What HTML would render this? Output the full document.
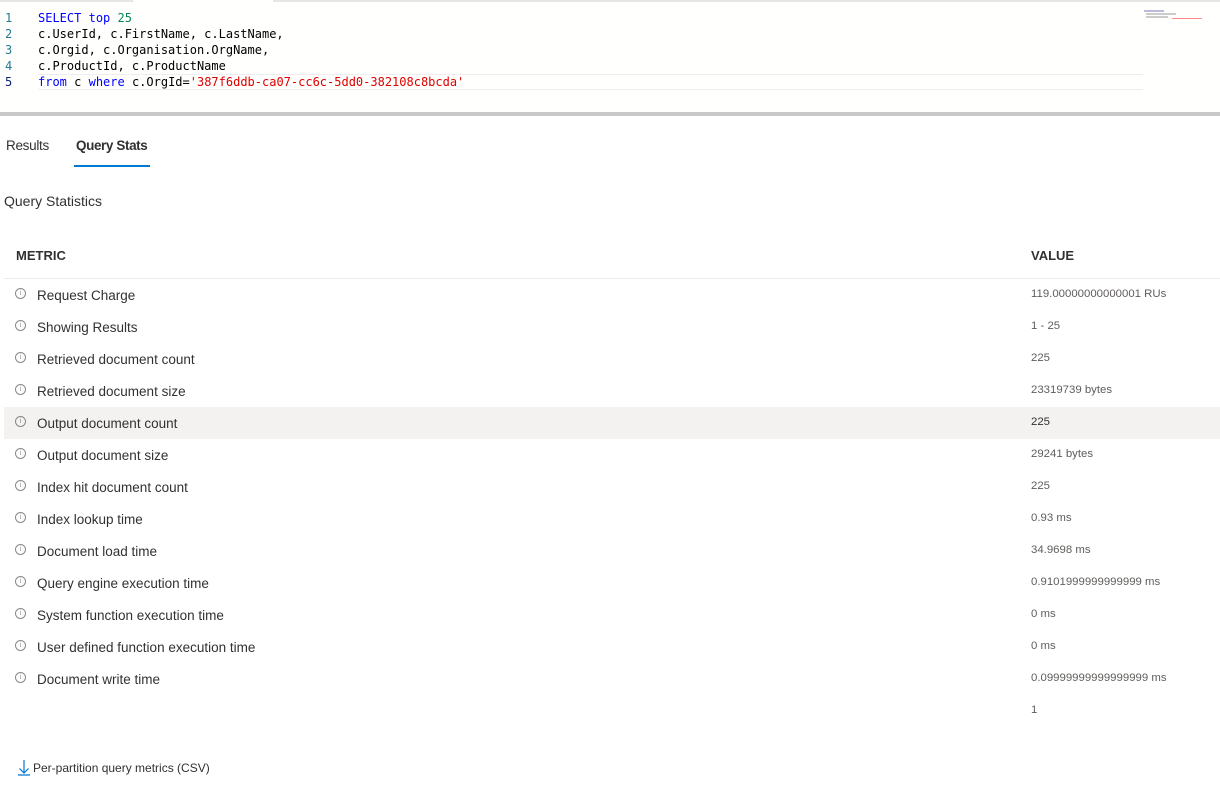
<!DOCTYPE html>
<html><head><style>
body{margin:0;width:1220px;height:785px;background:#fff;font-family:"Liberation Sans",sans-serif;position:relative;overflow:hidden;color:#323130}
.ed{position:absolute;left:0;top:0;width:1220px;height:112px;background:#fffffe}
.topl{position:absolute;top:0;height:2px;background:#e6e6e6}
.code{position:absolute;left:0;top:10px;font-family:"DejaVu Sans Mono",monospace;font-size:12px;line-height:16px;color:#000}
.ln{position:absolute;left:5px;width:20px;color:#237893}
.tx{position:absolute;left:38px;white-space:pre}
.kw{color:#0000ff}.nm{color:#098658}.st{color:#e00000}
.cur{position:absolute;left:38px;top:74px;width:1105px;height:14px;border-top:1px solid #eee;border-bottom:1px solid #eee}
.bar{position:absolute;left:0;top:112px;width:1220px;height:4px;background:#c8c8c8}
.tab{position:absolute;top:138px;font-size:13.5px;line-height:16px}
.row{position:absolute;left:4px;width:1216px;height:32px;font-size:13.5px}
.row .i{position:absolute;left:11px;top:9px;width:9px;height:9px;border:1px solid #888;border-radius:50%;font-size:7px;line-height:9px;text-align:center;color:#888}
.row .m{position:absolute;left:33px;top:9px}
.row .v{position:absolute;left:1027px;top:9px;font-size:11.4px;color:#605e5c}
</style></head><body>
<div class="ed"></div>
<div class="topl" style="left:0;width:133px"></div>
<div class="topl" style="left:273px;width:947px"></div>
<div class="cur"></div>
<div class="code">
<div class="ln" style="top:0">1</div><div class="tx" style="top:0"><span class="kw">SELECT</span> <span class="kw">top</span> <span class="nm">25</span></div>
<div class="ln" style="top:16px">2</div><div class="tx" style="top:16px">c.UserId, c.FirstName, c.LastName,</div>
<div class="ln" style="top:32px">3</div><div class="tx" style="top:32px">c.Orgid, c.Organisation.OrgName,</div>
<div class="ln" style="top:48px">4</div><div class="tx" style="top:48px">c.ProductId, c.ProductName</div>
<div class="ln" style="top:64px;color:#0b216f">5</div><div class="tx" style="top:64px"><span class="kw">from</span> c <span class="kw">where</span> c.OrgId=<span class="st">'387f6ddb-ca07-cc6c-5dd0-382108c8bcda'</span></div>
</div>
<div style="position:absolute;left:1144px;top:10px;width:20px;height:2px;background:#bbd"></div>
<div style="position:absolute;left:1146px;top:13px;width:30px;height:2px;background:#ccc"></div>
<div style="position:absolute;left:1146px;top:16px;width:22px;height:2px;background:#ccc"></div>
<div style="position:absolute;left:1172px;top:18px;width:30px;height:1px;background:#f88"></div>
<div class="bar"></div>
<div class="tab" style="left:6px;color:#323130;letter-spacing:-0.3px">Results</div>
<div class="tab" style="left:76px;font-weight:bold;color:#323130;letter-spacing:-0.4px">Query Stats</div>
<div style="position:absolute;left:74px;top:165px;width:76px;height:2px;background:#0078d4"></div>
<div style="position:absolute;left:4px;top:193px;font-size:14px">Query Statistics</div>
<div style="position:absolute;left:16px;top:248px;font-size:13px;font-weight:bold">METRIC</div>
<div style="position:absolute;left:1031px;top:248px;font-size:13px;font-weight:bold">VALUE</div>
<div style="position:absolute;left:4px;top:278px;width:1216px;height:1px;background:#edebe9"></div>
<div class="row" style="top:279px"><div class="i">i</div><div class="m">Request Charge</div><div class="v">119.00000000000001 RUs</div></div>
<div class="row" style="top:311px"><div class="i">i</div><div class="m">Showing Results</div><div class="v">1 - 25</div></div>
<div class="row" style="top:343px"><div class="i">i</div><div class="m">Retrieved document count</div><div class="v">225</div></div>
<div class="row" style="top:375px"><div class="i">i</div><div class="m">Retrieved document size</div><div class="v">23319739 bytes</div></div>
<div class="row" style="top:407px;background:#f3f2f1"><div class="i">i</div><div class="m">Output document count</div><div class="v" style="color:#323130">225</div></div>
<div class="row" style="top:439px"><div class="i">i</div><div class="m">Output document size</div><div class="v">29241 bytes</div></div>
<div class="row" style="top:471px"><div class="i">i</div><div class="m">Index hit document count</div><div class="v">225</div></div>
<div class="row" style="top:503px"><div class="i">i</div><div class="m">Index lookup time</div><div class="v">0.93 ms</div></div>
<div class="row" style="top:535px"><div class="i">i</div><div class="m">Document load time</div><div class="v">34.9698 ms</div></div>
<div class="row" style="top:567px"><div class="i">i</div><div class="m">Query engine execution time</div><div class="v">0.9101999999999999 ms</div></div>
<div class="row" style="top:599px"><div class="i">i</div><div class="m">System function execution time</div><div class="v">0 ms</div></div>
<div class="row" style="top:631px"><div class="i">i</div><div class="m">User defined function execution time</div><div class="v">0 ms</div></div>
<div class="row" style="top:663px"><div class="i">i</div><div class="m">Document write time</div><div class="v">0.09999999999999999 ms</div></div>
<div class="row" style="top:695px"><div class="v">1</div></div>
<svg style="position:absolute;left:18px;top:759px" width="12" height="17" viewBox="0 0 12 17"><path d="M6 1V14M1.5 9.5L6 14L10.5 9.5M0 16H12" stroke="#0078d4" stroke-width="1.2" fill="none"/></svg>
<div style="position:absolute;left:33px;top:761px;font-size:12px">Per-partition query metrics (CSV)</div>
</body></html>
